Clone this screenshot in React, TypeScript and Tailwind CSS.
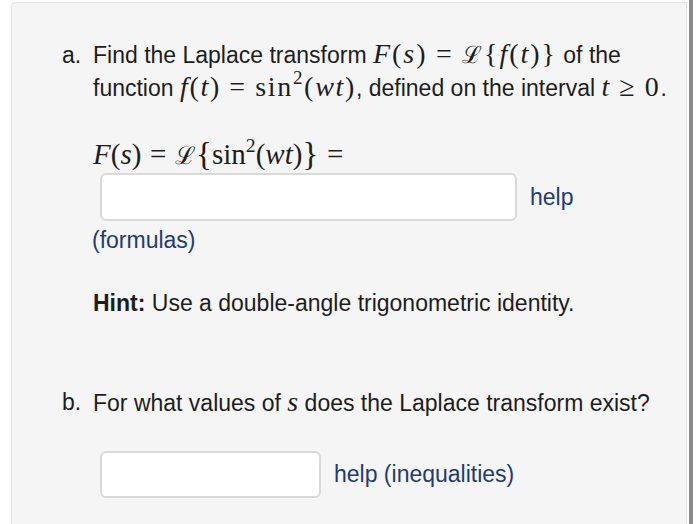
import React from "react";

const I = ({ children }: { children: React.ReactNode }) => (
  <span className="italic">{children}</span>
);
const Eq = () => <span className="mx-[0.3em]">=</span>;
const Cal = () => <span className="font-['DejaVu_Serif',serif] text-[0.85em]">ℒ</span>;
const Sup = ({ children }: { children: React.ReactNode }) => (
  <span className="text-[0.68em] relative top-[-0.62em]">{children}</span>
);
const Math = ({ children, cls = "" }: { children: React.ReactNode; cls?: string }) => (
  <span className={"font-['Liberation_Serif','DejaVu_Serif',serif] leading-none " + cls}>{children}</span>
);

export default function App() {
  return (
    <div className="w-[700px] h-[524px] bg-white overflow-hidden flex font-['Liberation_Sans',Arial,sans-serif] text-[#1d1d1d]">
      <div className="ml-[11px] mt-[2px] w-[676px] h-[540px] bg-[#f5f5f5] border border-[#e2e2e2] rounded-tl-[4px] pt-[36px] pl-[50px] text-[23px]">
        <div className="flex">
          <span className="w-[31px] shrink-0 leading-[33px]">a.</span>
          <div className="flex-1">
            <p className="h-[33px] leading-[33px] whitespace-nowrap">
              Find the Laplace transform{" "}
              <Math cls="text-[28px] tracking-[0.07em]">
                <I>F</I>(<I>s</I>)
                <Eq />
                <Cal />
                {"{"}
                <I>f</I>(<I>t</I>){"}"}
              </Math>{" "}
              of the
            </p>
            <p className="h-[33px] leading-[33px] whitespace-nowrap">
              function{" "}
              <Math cls="text-[28px] tracking-[0.06em]">
                <I>f</I>(<I>t</I>)
                <Eq />
                sin
                <Sup>2</Sup>(<I>wt</I>)
              </Math>
              , defined on the interval{" "}
              <Math cls="text-[28px] tracking-[0.06em]">
                <I>t</I>
                <span className="mx-[0.3em]">≥</span>0
              </Math>
              .
            </p>

            <div className="mt-[32px] h-[36px] leading-[36px] whitespace-nowrap">
              <Math cls="text-[29px]">
                <I>F</I>(<I>s</I>)
                <Eq />
                <Cal />
                <span className="text-[33px] relative top-[1px]">{"{"}</span>
                sin
                <Sup>2</Sup>(<I>wt</I>)
                <span className="text-[33px] relative top-[1px]">{"}"}</span>
                <Eq />
              </Math>
            </div>

            <div className="flex items-center pl-[7px]">
              <div className="w-[417px] h-[48px] bg-white border-2 border-[#d9d9d9] rounded-[6px]" />
              <span className="ml-[13px] text-[#1f3c70]">help</span>
            </div>
            <div className="mt-[5px] leading-[28px] text-[#1f3c70] -ml-[1px]">(formulas)</div>

            <p className="mt-[35px] leading-[28px]">
              <b>Hint:</b> Use a double-angle trigonometric identity.
            </p>
          </div>
        </div>

        <div className="flex mt-[71px]">
          <span className="w-[31px] shrink-0 leading-[28px]">b.</span>
          <div className="flex-1">
            <p className="h-[28px] leading-[28px] whitespace-nowrap">
              For what values of{" "}
              <Math cls="text-[28px]">
                <I>s</I>
              </Math>{" "}
              does the Laplace transform exist?
            </p>
            <div className="flex items-center pl-[7px] mt-[35px]">
              <div className="w-[221px] h-[47px] bg-white border-2 border-[#d9d9d9] rounded-[6px]" />
              <span className="ml-[13px] text-[#1f3c70]">help (inequalities)</span>
            </div>
          </div>
        </div>
      </div>
      <div className="ml-[2px] w-[4px] h-[524px] bg-[#8a8a8a]" />
    </div>
  );
}
